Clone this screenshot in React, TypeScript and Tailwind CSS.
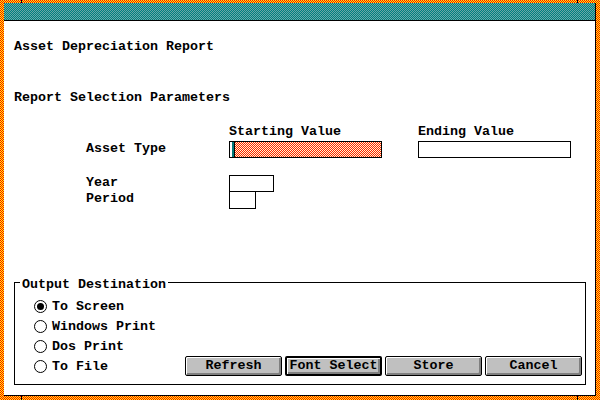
import React from "react";

const checkerFrame =
  "bg-[conic-gradient(#ffff00_25%,#ff0000_0_50%,#ffff00_0_75%,#ff0000_0)] bg-[length:2px_2px]";
const checkerTitle =
  "bg-[conic-gradient(#6aa8a8_25%,#008080_0_50%,#6aa8a8_0_75%,#008080_0)] bg-[length:2px_2px]";
const checkerField =
  "bg-[conic-gradient(#ff2000_25%,#fff8d0_0_50%,#ff2000_0_75%,#fff8d0_0)] bg-[length:2px_2px]";

type RadioProps = { label: string; checked?: boolean };

function Radio({ label, checked }: RadioProps) {
  return (
    <div className="flex h-[20px] items-start gap-[5px]">
      <div className="mt-[1px] flex h-[13px] w-[13px] items-center justify-center rounded-full border border-black bg-white">
        {checked && <div className="h-[7px] w-[7px] rounded-full bg-black" />}
      </div>
      <span className="leading-[16px]">{label}</span>
    </div>
  );
}

type ButtonProps = { label: string; focused?: boolean };

function WinButton({ label, focused }: ButtonProps) {
  return (
    <div
      className={
        "flex h-[20px] w-[97px] items-center justify-center rounded-[2px] border-black bg-[#c0c0c0] leading-[16px] shadow-[inset_1px_1px_0_#fff,inset_-2px_-2px_0_#808080] " +
        (focused ? "border-2" : "border")
      }
    >
      {label}
    </div>
  );
}

export default function App() {
  return (
    <div
      className={
        "relative h-[400px] w-[600px] pl-[4px] pt-[3px] pr-[4px] pb-[4px] font-['Liberation_Mono',monospace] text-[13.33px] font-bold text-black " +
        checkerFrame
      }
    >
      {/* resize corner marks */}
      <div className="absolute left-[21px] top-0 h-[3px] w-px bg-black" />
      <div className="absolute left-[577px] top-0 h-[3px] w-px bg-black" />
      <div className="absolute bottom-0 left-[21px] h-[4px] w-px bg-black" />
      <div className="absolute bottom-0 left-[577px] h-[4px] w-px bg-black" />

      <div className="flex h-full flex-col border-b border-r border-black bg-white">
        <div className={"h-[18px] border-b border-black " + checkerTitle} />

        <div className="flex flex-col pl-[10px]">
          <div className="mt-[18px] leading-[16px]">Asset Depreciation Report</div>
          <div className="mt-[35px] leading-[16px]">Report Selection Parameters</div>

          <div className="mt-[18px] flex h-[16px] pl-[72px] leading-[16px]">
            <div className="w-[143px]" />
            <div className="w-[189px]">Starting Value</div>
            <div>Ending Value</div>
          </div>

          <div className="mt-[1px] flex h-[17px] pl-[72px] leading-[16px]">
            <div className="w-[143px]">Asset Type</div>
            <div className="w-[189px]">
              <div className={"flex h-[17px] w-[153px] border border-black " + checkerField}>
                <div className="w-[2px] bg-white" />
                <div className="w-[2px] bg-[#007878]" />
                <div className="w-px bg-black" />
              </div>
            </div>
            <div className="h-[17px] w-[153px] border border-black bg-white" />
          </div>

          <div className="mt-[17px] flex h-[16px] pl-[72px] leading-[16px]">
            <div className="w-[143px]">Year</div>
            <div className="h-[17px] w-[45px] border border-black bg-white" />
          </div>
          <div className="flex h-[18px] pl-[72px] leading-[16px]">
            <div className="w-[143px]">Period</div>
            <div className="relative h-[18px] w-[27px] border border-black bg-white" />
          </div>

          <div className="relative mt-[73px] flex h-[103px] w-[572px] border border-black">
            <span className="absolute -top-[4px] left-[5px] bg-white px-[2px] leading-[12px]">
              Output Destination
            </span>
            <div className="flex flex-col pl-[19px] pt-[16px]">
              <Radio label="To Screen" checked />
              <Radio label="Windows Print" />
              <Radio label="Dos Print" />
              <Radio label="To File" />
            </div>
            <div className="mb-[8px] ml-auto mr-[3px] flex gap-[3px] self-end">
              <WinButton label="Refresh" />
              <WinButton label="Font Select" focused />
              <WinButton label="Store" />
              <WinButton label="Cancel" />
            </div>
          </div>
        </div>
      </div>
    </div>
  );
}
